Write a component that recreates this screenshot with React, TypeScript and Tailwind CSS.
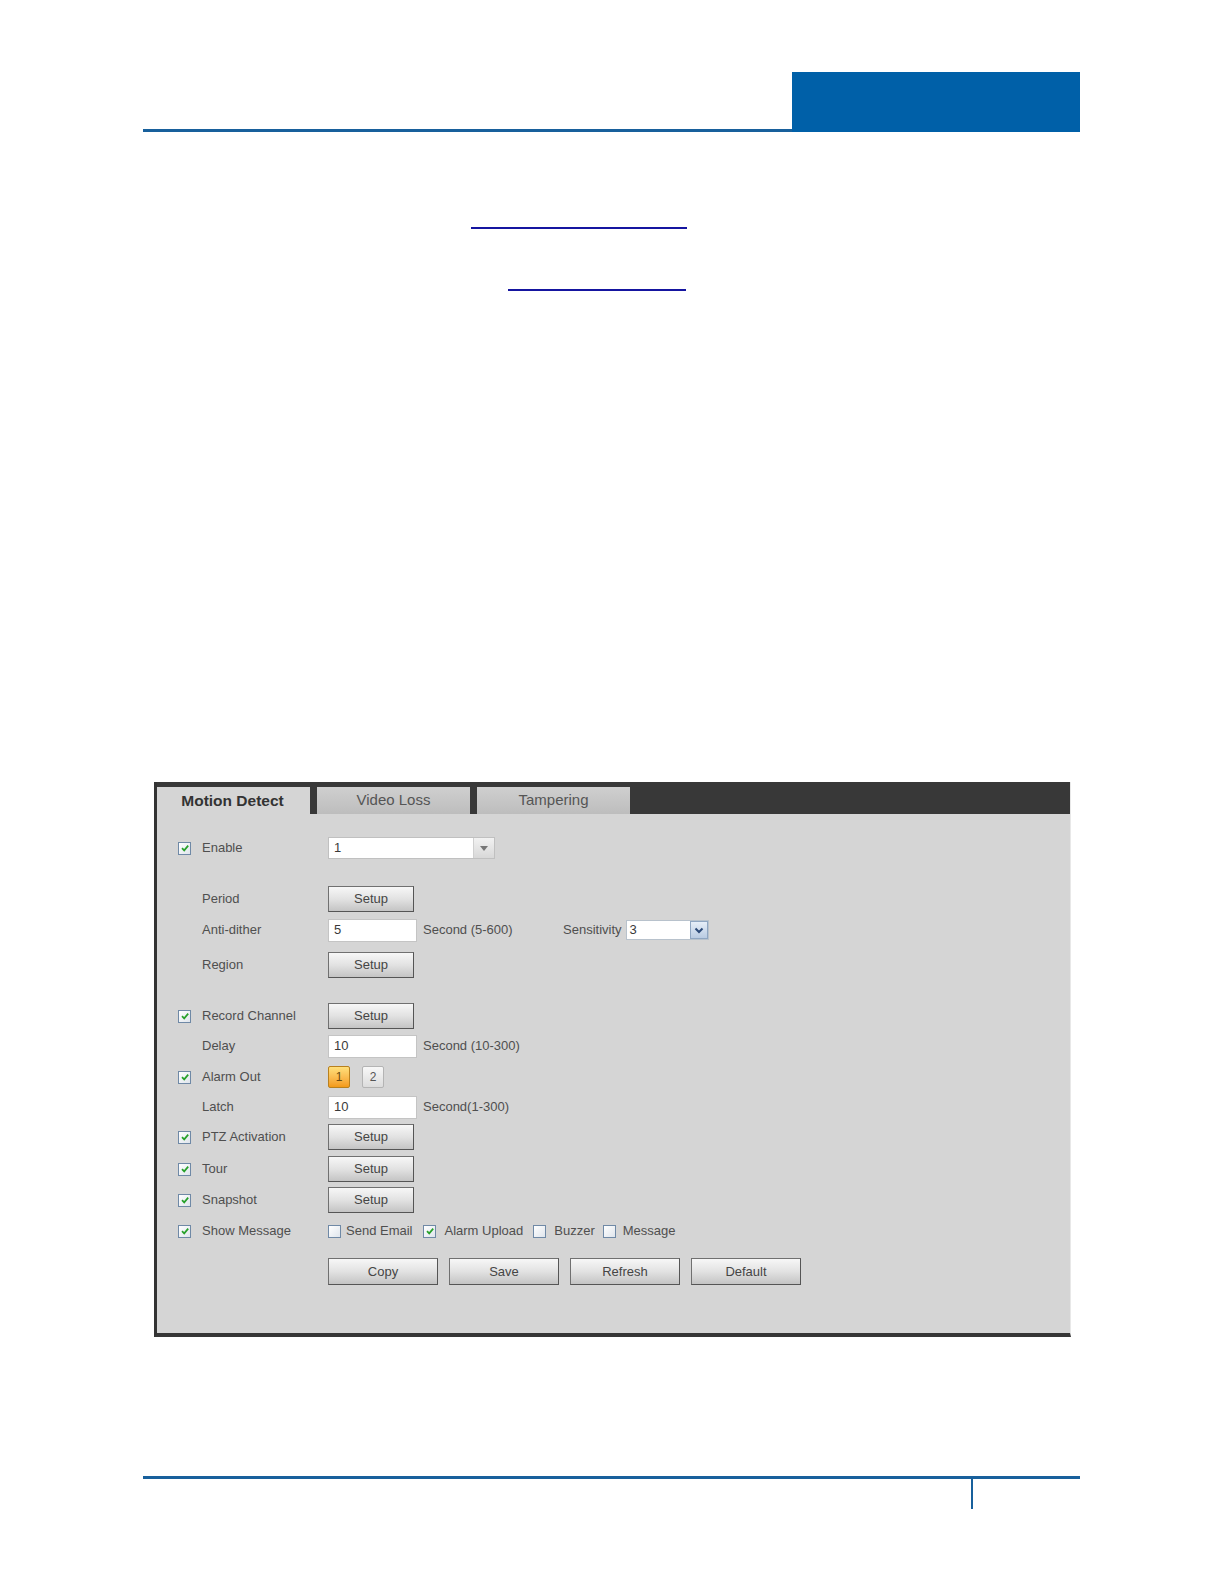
import type { ReactNode } from 'react';

const FONT = { fontFamily: '"Liberation Sans", Arial, sans-serif' };

function Check({ checked = true }: { checked?: boolean }) {
  return (
    <span className="relative inline-flex h-[13px] w-[13px] shrink-0 items-center justify-center border border-[#6f89a6] bg-gradient-to-br from-white to-[#dfe5ec]">
      {checked && (
        <svg viewBox="0 0 10 10" className="h-[10px] w-[10px]">
          <path d="M2 5.2 L4.2 7.4 L8.2 2.6" fill="none" stroke="#27a12a" strokeWidth="1.7" />
        </svg>
      )}
    </span>
  );
}

function Btn({ children, w = 'w-[86px]', h = 'h-[26px]' }: { children: ReactNode; w?: string; h?: string }) {
  return (
    <div
      className={`${w} ${h} flex items-center justify-center border border-[#707070] border-b-[#555] border-r-[#555] bg-gradient-to-b from-[#f7f7f7] via-[#e2e2e2] to-[#c4c4c4] text-[13px] text-[#454545]`}
    >
      {children}
    </div>
  );
}

function Input({ value }: { value: string }) {
  return (
    <div className="flex h-[23px] w-[89px] items-center border border-[#c4c4c4] bg-white pl-[5px] text-[13px] text-[#3a3a3a]">
      {value}
    </div>
  );
}

function Row({ mt, check, label, children }: { mt: string; check?: boolean; label: string; children?: ReactNode }) {
  return (
    <div className={`${mt} flex h-[26px] items-center pl-[21px]`}>
      <div className="mr-[11px] flex w-[13px] items-center">{check && <Check />}</div>
      <div className="w-[126px] text-[13px] text-[#4f4f4f]">{label}</div>
      <div className="flex items-center">{children}</div>
    </div>
  );
}

function Note({ children, className = '' }: { children: ReactNode; className?: string }) {
  return <span className={`text-[13px] text-[#4f4f4f] ${className}`}>{children}</span>;
}

export default function App() {
  return (
    <div className="relative h-[1584px] w-[1224px] overflow-hidden bg-white" style={FONT}>
      {/* header band */}
      <div className="flex pl-[143px] pt-[72px]">
        <div className="h-[3px] w-[649px] self-end bg-[#18609c]" />
        <div className="h-[60px] w-[288px] bg-[#0060a8]" />
      </div>

      {/* blank hyperlinks */}
      <div className="ml-[471px] mt-[95px] h-[2px] w-[216px] bg-[#1515a0]" />
      <div className="ml-[508px] mt-[60px] h-[2px] w-[178px] bg-[#1515a0]" />

      {/* settings screenshot */}
      <div className="ml-[154px] mt-[491px] flex h-[555px] w-[917px] flex-col border-b-[4px] border-l-[3px] border-r border-b-[#363636] border-l-[#333] border-r-[#e8e8e8] bg-[#d5d5d5]">
        <div className="flex h-[32px] items-end gap-[7px] bg-[#383838]">
          <div className="flex h-[27px] w-[153px] items-center justify-center bg-[#d5d5d5] pr-[2px] text-[15.5px] font-bold text-[#333]">
            Motion Detect
          </div>
          <div className="flex h-[27px] w-[153px] items-center justify-center bg-gradient-to-b from-[#cfcfcf] to-[#bdbdbd] text-[15px] text-[#555]">
            Video Loss
          </div>
          <div className="flex h-[27px] w-[153px] items-center justify-center bg-gradient-to-b from-[#cfcfcf] to-[#bdbdbd] text-[15px] text-[#555]">
            Tampering
          </div>
        </div>

        <Row mt="mt-[21px]" check label="Enable">
          <div className="flex h-[22px] w-[167px] border border-[#c0c0c0] bg-white">
            <div className="flex flex-1 items-center pl-[5px] text-[13px] text-[#3a3a3a]">1</div>
            <div className="flex w-[21px] items-center justify-center border-l border-[#d0d0d0] bg-gradient-to-b from-[#f2f2f2] to-[#d8d8d8]">
              <svg viewBox="0 0 8 5" className="h-[5px] w-[8px]">
                <path d="M0 0 H8 L4 5 Z" fill="#777" />
              </svg>
            </div>
          </div>
        </Row>

        <Row mt="mt-[25px]" label="Period">
          <Btn>Setup</Btn>
        </Row>
        <Row mt="mt-[5px]" label="Anti-dither">
          <Input value="5" />
          <Note className="ml-[6px] w-[140px]">Second (5-600)</Note>
          <Note className="mr-[4px]">Sensitivity</Note>
          <div className="flex h-[20px] w-[83px] border border-[#b8c2cc] bg-white">
            <div className="flex flex-1 items-center pl-[3px] text-[13px] text-[#3a3a3a]">3</div>
            <div className="flex w-[18px] items-center justify-center border border-[#8fa6c2] bg-gradient-to-b from-[#e6eef8] to-[#b9cbe2]">
              <svg viewBox="0 0 10 7" className="h-[7px] w-[10px]">
                <path d="M1.5 1.5 L5 5 L8.5 1.5" fill="none" stroke="#2c4a78" strokeWidth="2" />
              </svg>
            </div>
          </div>
        </Row>
        <Row mt="mt-[9px]" label="Region">
          <Btn>Setup</Btn>
        </Row>

        <Row mt="mt-[25px]" check label="Record Channel">
          <Btn>Setup</Btn>
        </Row>
        <Row mt="mt-[4px]" label="Delay">
          <Input value="10" />
          <Note className="ml-[6px]">Second (10-300)</Note>
        </Row>
        <Row mt="mt-[5px]" check label="Alarm Out">
          <div className="flex h-[22px] w-[22px] items-center justify-center rounded-[2px] border border-[#b8801e] bg-gradient-to-b from-[#ffe07a] to-[#f39a16] text-[12px] text-[#6a4a10]">
            1
          </div>
          <div className="ml-[12px] flex h-[22px] w-[22px] items-center justify-center rounded-[2px] border border-[#b4b4b4] bg-gradient-to-b from-[#f8f8f8] to-[#dcdcdc] text-[12px] text-[#555]">
            2
          </div>
        </Row>
        <Row mt="mt-[4px]" label="Latch">
          <Input value="10" />
          <Note className="ml-[6px]">Second(1-300)</Note>
        </Row>
        <Row mt="mt-[4px]" check label="PTZ Activation">
          <Btn>Setup</Btn>
        </Row>
        <Row mt="mt-[6px]" check label="Tour">
          <Btn>Setup</Btn>
        </Row>
        <Row mt="mt-[5px]" check label="Snapshot">
          <Btn>Setup</Btn>
        </Row>
        <Row mt="mt-[5px]" check label="Show Message">
          <div className="flex items-center">
            <Check checked={false} />
            <Note className="ml-[5px]">Send Email</Note>
            <span className="ml-[11px]" />
            <Check />
            <Note className="ml-[8px]">Alarm Upload</Note>
            <span className="ml-[10px]" />
            <Check checked={false} />
            <Note className="ml-[8px]">Buzzer</Note>
            <span className="ml-[8px]" />
            <Check checked={false} />
            <Note className="ml-[7px]">Message</Note>
          </div>
        </Row>

        <div className="mt-[14px] flex gap-[11px] pl-[171px]">
          <Btn w="w-[110px]" h="h-[27px]">Copy</Btn>
          <Btn w="w-[110px]" h="h-[27px]">Save</Btn>
          <Btn w="w-[110px]" h="h-[27px]">Refresh</Btn>
          <Btn w="w-[110px]" h="h-[27px]">Default</Btn>
        </div>
      </div>

      {/* footer */}
      <div className="ml-[143px] mt-[139px] w-[937px]">
        <div className="h-[3px] bg-[#18609c]" />
        <div className="ml-[828px] h-[30px] w-[2px] bg-[#18609c]" />
      </div>
    </div>
  );
}
